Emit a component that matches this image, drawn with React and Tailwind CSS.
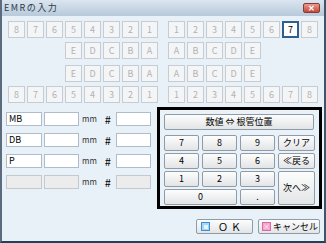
import React from 'react';

const jp = "font-['Noto_Sans_CJK_JP',sans-serif]";

const Key = ({ label, sel }) => (
  <div
    className={
      sel
        ? 'w-[17px] h-[17px] flex items-center justify-center border-2 border-[#2f5f8f] bg-white text-[9px] text-black'
        : 'w-[17px] h-[17px] flex items-center justify-center border border-[#c6ccd2] bg-[#f3f5f7] text-[9px] text-[#b3b3b3]'
    }
  >
    {label}
  </div>
);

const Group = ({ keys, end, sel }) => (
  <div className={end ? 'w-[151px] flex justify-end gap-[2px]' : 'w-[151px] flex gap-[2px]'}>
    {keys.map((k) => (
      <Key key={k} label={k} sel={sel === k} />
    ))}
  </div>
);

const down = ['8', '7', '6', '5', '4', '3', '2', '1'];
const up = ['1', '2', '3', '4', '5', '6', '7', '8'];
const lettersL = ['E', 'D', 'C', 'B', 'A'];
const lettersR = ['A', 'B', 'C', 'D', 'E'];

const Pad = ({ children, className = '' }) => (
  <div
    className={`flex items-center justify-center border border-[#8f9ba7] rounded-[2px] bg-gradient-to-b from-[#fdfdfd] to-[#e2e4e6] text-[9px] text-black ${className}`}
  >
    {children}
  </div>
);

const FormRow = ({ label, disabled }) => {
  const box = disabled
    ? 'h-[14px] border border-[#c3c9cf] bg-[#ececec]'
    : 'h-[14px] border border-[#aebccb] bg-white';
  return (
    <div className="flex items-center h-[14px]">
      <div className={`${box} w-[36px] flex items-center pl-[2px] text-[9px] text-black`}>{label}</div>
      <div className={`${box} w-[35px] ml-[2px]`} />
      <span className="ml-[3px] text-[8px] text-[#333]">mm</span>
      <span className="ml-[8px] text-[11px] text-black">#</span>
      <div className={`${box} w-[35px] ml-[5px]`} />
    </div>
  );
};

export default function App() {
  return (
    <div
      className={`w-[326px] h-[243px] flex flex-col bg-[#e9f1f8] border-x-2 border-b-2 border-l-[#5a6c7e] border-r-[#3d5668] border-b-[#1c4454] ${jp}`}
    >
      <div className="h-[16px] shrink-0 flex items-center justify-between bg-gradient-to-b from-[#dae5f0] to-[#b8c9da] pl-[2px] pr-[4px]">
        <span className="text-[9px] tracking-[1.5px] text-[#2e3b48]">EMRの入力</span>
        <div className="w-[17px] h-[10px] rounded-[2px] bg-gradient-to-b from-[#e99a8c] to-[#c4463a] border border-[#8a3a32] flex items-center justify-center text-[8px] leading-none font-bold text-white">
          ✕
        </div>
      </div>

      <div className="flex gap-[10px] pl-[5px] mt-[5px]">
        <Group keys={down} end />
        <Group keys={up} sel="7" />
      </div>
      <div className="flex gap-[10px] pl-[5px] mt-[4px]">
        <Group keys={lettersL} end />
        <Group keys={lettersR} />
      </div>
      <div className="flex gap-[10px] pl-[5px] mt-[6px]">
        <Group keys={lettersL} end />
        <Group keys={lettersR} />
      </div>
      <div className="flex gap-[10px] pl-[5px] mt-[4px]">
        <Group keys={down} end />
        <Group keys={up} />
      </div>

      <div className="flex mt-[4px]">
        <div className="w-[155px] pl-[4px] pt-[5px] flex flex-col gap-[7px]">
          <FormRow label="MB" />
          <FormRow label="DB" />
          <FormRow label="P" />
          <FormRow label="" disabled />
        </div>
        <div className="w-[165px] h-[102px] border-[3px] border-black bg-[#eaf2f9] pl-[4px] pt-[4px]">
          <Pad className="w-[150px] h-[16px]">数値 ⇔ 根管位置</Pad>
          <div className="grid grid-cols-[35px_35px_35px_37px] grid-rows-[16px_16px_16px_16px] gap-x-[3px] gap-y-[2px] mt-[5px]">
            <Pad>7</Pad>
            <Pad>8</Pad>
            <Pad>9</Pad>
            <Pad>クリア</Pad>
            <Pad>4</Pad>
            <Pad>5</Pad>
            <Pad>6</Pad>
            <Pad>≪戻る</Pad>
            <Pad>1</Pad>
            <Pad>2</Pad>
            <Pad>3</Pad>
            <Pad className="row-span-2">次へ≫</Pad>
            <Pad className="col-span-2">0</Pad>
            <Pad>.</Pad>
          </div>
        </div>
      </div>

      <div className="flex justify-end gap-[5px] pr-[4px] mt-[10px]">
        <Pad className="w-[57px] h-[15px] gap-[8px] justify-start pl-[4px]">
          <span className="w-[9px] h-[9px] border border-[#3d8fd6] bg-[#a8d6f7] flex items-center justify-center">
            <span className="w-[4px] h-[4px] bg-[#e8f5ff]" />
          </span>
          <span className="text-[10px] tracking-[3px]">ＯＫ</span>
        </Pad>
        <Pad className="w-[62px] h-[15px] gap-[2px] justify-start pl-[3px]">
          <span className="w-[9px] h-[9px] border border-[#d86aa8] bg-[#f4a6cf] flex items-center justify-center text-[7px] leading-none text-white">
            ×
          </span>
          <span className="text-[9px]">キャンセル</span>
        </Pad>
      </div>
    </div>
  );
}
